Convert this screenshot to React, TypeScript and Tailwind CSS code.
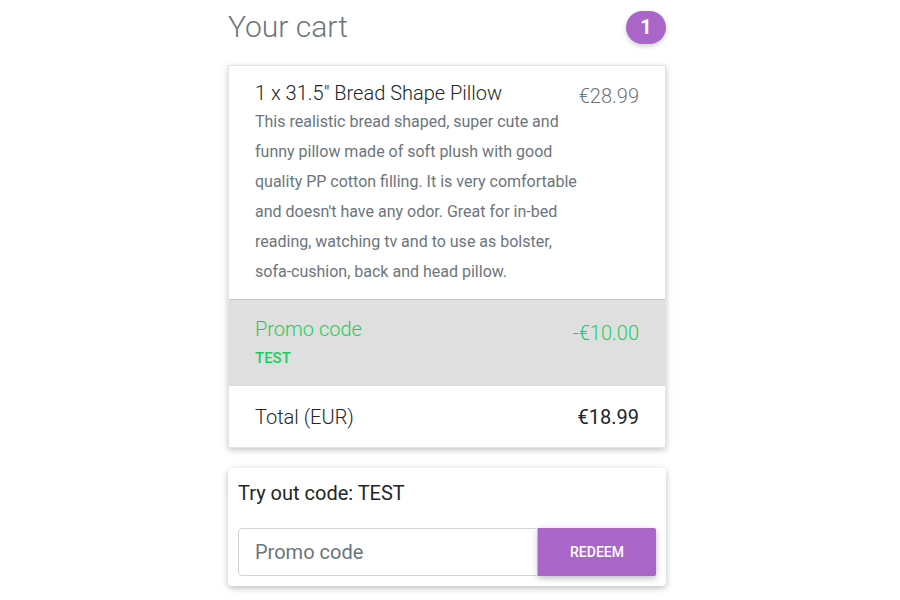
import React from "react";

export default function App() {
  return (
    <div className="min-h-[600px] w-[900px] bg-white" style={{ fontFamily: "Roboto, 'Liberation Sans', sans-serif" }}>
      <div className="ml-[228px] w-[438px] pt-[8px]">
        <div className="flex items-center justify-between h-[38px]">
          <h4 className="text-[30px] font-light text-[#6c757d] leading-[38px]">Your cart</h4>
          <span className="flex h-[33px] w-[40px] items-center justify-center rounded-full bg-[#a966c8] text-[20px] font-bold text-white shadow-[0_2px_5px_rgba(0,0,0,0.2)]">1</span>
        </div>
        <div className="mt-[19px] border border-[#e4e4e4] bg-white shadow-[0_2px_5px_rgba(0,0,0,0.16),0_2px_10px_rgba(0,0,0,0.08)]">
          <div className="flex justify-between pl-[26px] pr-[26px] pt-[15px] pb-[12px]">
            <div className="w-[330px]">
              <div className="text-[20px] font-light leading-[24px] text-[#212529]">1 x 31.5" Bread Shape Pillow</div>
              <div className="mt-[2px] text-[16px] leading-[30px] text-[#6c757d]">
                This realistic bread shaped, super cute and funny pillow made of soft plush with good quality PP cotton filling. It is very comfortable and doesn't have any odor. Great for in-bed reading, watching tv and to use as bolster, sofa-cushion, back and head pillow.
              </div>
            </div>
            <span className="text-[20px] font-light leading-[24px] text-[#6c757d] pt-[3px]">€28.99</span>
          </div>
          <div className="flex justify-between border-t border-[#c8c8c8] bg-[#dfdfdf] pl-[26px] pr-[26px] pt-[17px] pb-[11px]">
            <div>
              <div className="text-[20px] font-light leading-[24px] text-[#19cf5a]">Promo code</div>
              <div className="text-[15px] font-medium leading-[34px] text-[#19cf5a]">TEST</div>
            </div>
            <span className="text-[20px] font-light leading-[24px] text-[#19cf5a] pt-[4px]">-€10.00</span>
          </div>
          <div className="flex justify-between items-center h-[61px] pl-[26px] pr-[26px]">
            <span className="text-[20px] font-light text-[#212529]">Total (EUR)</span>
            <span className="text-[20px] font-normal text-[#212529]">€18.99</span>
          </div>
        </div>
        <div className="mt-[20px] rounded-[4px] bg-white p-[10px] pt-[12px] shadow-[0_2px_5px_rgba(0,0,0,0.16),0_2px_10px_rgba(0,0,0,0.12)]">
          <div className="text-[20px] leading-[26px] text-[#212529]">Try out code: TEST</div>
          <div className="mt-[22px] flex">
            <input
              className="h-[48px] w-[300px] rounded-l-[4px] border border-[#ced4da] pl-[16px] text-[20px] text-[#495057] placeholder:text-[#6c757d] outline-none"
              placeholder="Promo code"
            />
            <button className="h-[48px] flex-1 rounded-r-[2px] bg-[#a966c8] text-[14px] font-medium text-white shadow-[0_2px_5px_rgba(0,0,0,0.16),0_2px_10px_rgba(0,0,0,0.12)]">
              REDEEM
            </button>
          </div>
        </div>
      </div>
    </div>
  );
}
